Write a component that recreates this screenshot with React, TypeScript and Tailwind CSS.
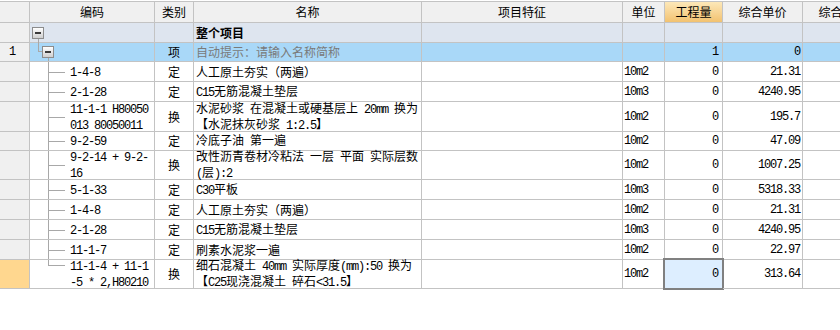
import React from 'react';

const MONO = "font-['Liberation_Mono',monospace] text-[12px] tracking-[-1.2px]";

function T({ s }: { s: string }) {
  const parts = s.split(/([\x20-\x7e]+)/).filter((p) => p !== '');
  return (
    <>
      {parts.map((p, i) =>
        /^[\x20-\x7e]+$/.test(p) ? (
          <span key={i} className={MONO}>
            {p}
          </span>
        ) : (
          <span key={i}>{p}</span>
        )
      )}
    </>
  );
}

const cell =
  'shrink-0 border-r border-b border-[#c3c3c3] flex items-center overflow-hidden relative whitespace-pre';
const ncell =
  'shrink-0 border-r border-b border-[#c3c3c3] flex items-center relative whitespace-pre';
const hcell =
  'shrink-0 border-t border-r border-b border-[#c3c3c3] flex items-center justify-center bg-[#f0f0f0]';
const LINE = 'bg-[#a8a8a8]';

function MinusBox({ cls }: { cls: string }) {
  return (
    <span
      className={`absolute w-[12px] h-[12px] border border-[#8c8c8c] bg-linear-to-b from-white to-[#cfcfcf] flex items-center justify-center ${cls}`}
    >
      <span className="w-[6px] h-[2px] bg-[#3a3a3a]" />
    </span>
  );
}

type Item = {
  h: string;
  code: string[];
  cat: string;
  name: string[];
  unit: string;
  qty: string;
  price: string;
  last?: boolean;
};

const items: Item[] = [
  { h: 'h-[20px]', code: ['1-4-8'], cat: '定', name: ['人工原土夯实（两遍）'], unit: '10m2', qty: '0', price: '21.31' },
  { h: 'h-[20px]', code: ['2-1-28'], cat: '定', name: ['C15无筋混凝土垫层'], unit: '10m3', qty: '0', price: '4240.95' },
  {
    h: 'h-[30px]',
    code: ['11-1-1 H80050', '013 80050011'],
    cat: '换',
    name: ['水泥砂浆 在混凝土或硬基层上 20mm 换为', '【水泥抹灰砂浆 1:2.5】'],
    unit: '10m2',
    qty: '0',
    price: '195.7',
  },
  { h: 'h-[19px]', code: ['9-2-59'], cat: '定', name: ['冷底子油 第一遍'], unit: '10m2', qty: '0', price: '47.09' },
  {
    h: 'h-[29px]',
    code: ['9-2-14 + 9-2-', '16'],
    cat: '换',
    name: ['改性沥青卷材冷粘法 一层 平面 实际层数', '(层):2'],
    unit: '10m2',
    qty: '0',
    price: '1007.25',
  },
  { h: 'h-[20px]', code: ['5-1-33'], cat: '定', name: ['C30平板'], unit: '10m3', qty: '0', price: '5318.33' },
  { h: 'h-[20px]', code: ['1-4-8'], cat: '定', name: ['人工原土夯实（两遍）'], unit: '10m2', qty: '0', price: '21.31' },
  { h: 'h-[20px]', code: ['2-1-28'], cat: '定', name: ['C15无筋混凝土垫层'], unit: '10m3', qty: '0', price: '4240.95' },
  { h: 'h-[20px]', code: ['11-1-7'], cat: '定', name: ['刷素水泥浆一遍'], unit: '10m2', qty: '0', price: '22.97' },
  {
    h: 'h-[29px]',
    code: ['11-1-4 + 11-1', '-5 * 2,H80210'],
    cat: '换',
    name: ['细石混凝土 40mm 实际厚度(mm):50 换为', '【C25现浇混凝土 碎石<31.5】'],
    unit: '10m2',
    qty: '0',
    price: '313.64',
    last: true,
  },
];

function Lines({ lines }: { lines: string[] }) {
  return (
    <div className="leading-[13px]">
      {lines.map((l, i) => (
        <div key={i}>
          <T s={l} />
        </div>
      ))}
    </div>
  );
}

export default function App() {
  return (
    <div className="w-[840px] h-[330px] overflow-hidden bg-white text-black font-['Noto_Sans_CJK_SC',sans-serif] text-[12px]">
      {/* header */}
      <div className="flex h-[22px] mt-px">
        <div className={`${hcell} w-[30px]`} />
        <div className={`${hcell} w-[125px]`}>编码</div>
        <div className={`${hcell} w-[39px]`}>类别</div>
        <div className={`${hcell} w-[228px]`}>名称</div>
        <div className={`${hcell} w-[201px]`}>项目特征</div>
        <div className={`${hcell} w-[42px]`}>单位</div>
        <div className={`${hcell} w-[58px] bg-linear-to-b from-[#fde8b8] to-[#f2c270]`}>工程量</div>
        <div className={`${hcell} w-[80px]`}>综合单价</div>
        <div className={`${hcell} w-[80px]`}>综合合价</div>
      </div>

      {/* root row */}
      <div className="flex h-[20px]">
        <div className={`${cell} w-[30px] bg-[#f0f0f0]`} />
        <div className={`${cell} w-[125px] bg-[#dee5ef] overflow-visible`}>
          <MinusBox cls="left-[2px] top-[4px]" />
          <span className={`absolute left-[8px] top-[16px] -bottom-px w-px ${LINE}`} />
        </div>
        <div className={`${cell} w-[39px] bg-[#dee5ef]`} />
        <div className={`${cell} w-[228px] bg-[#dee5ef] pl-[2px] font-bold`}>整个项目</div>
        <div className={`${cell} w-[201px] bg-[#dee5ef]`} />
        <div className={`${cell} w-[42px] bg-[#dee5ef]`} />
        <div className={`${cell} w-[58px] bg-[#dee5ef]`} />
        <div className={`${cell} w-[80px] bg-[#dee5ef]`} />
        <div className={`${cell} w-[80px] bg-[#dee5ef]`} />
      </div>

      {/* group row */}
      <div className="flex h-[19px]">
        <div className={`${cell} w-[30px] bg-[#f0f0f0] pl-[9px]`}>
          <span className={MONO}>1</span>
        </div>
        <div className={`${cell} w-[125px] bg-[#a9d8f8]`}>
          <span className={`absolute left-[8px] top-0 h-[9px] w-px ${LINE}`} />
          <span className={`absolute left-[8px] top-[8px] w-[5px] h-px ${LINE}`} />
          <MinusBox cls="left-[12px] top-[3px]" />
          <span className={`absolute left-[18px] top-[15px] -bottom-px w-px ${LINE}`} />
        </div>
        <div className={`${cell} w-[39px] bg-[#a9d8f8] justify-center`}>项</div>
        <div className={`${ncell} w-[228px] bg-[#a9d8f8] pl-[2px] text-[#7a7a7a]`}>自动提示：请输入名称简称</div>
        <div className={`${cell} w-[201px] bg-[#a9d8f8]`} />
        <div className={`${cell} w-[42px] bg-[#a9d8f8]`} />
        <div className={`${cell} w-[58px] bg-[#a9d8f8] justify-end pr-[4px]`}>
          <span className={MONO}>1</span>
        </div>
        <div className={`${cell} w-[80px] bg-[#a9d8f8] justify-end pr-[2px]`}>
          <span className={MONO}>0</span>
        </div>
        <div className={`${cell} w-[80px] bg-[#a9d8f8]`} />
      </div>

      {items.map((it, idx) => (
        <div key={idx} className={`flex ${it.h}`}>
          <div className={`${cell} w-[30px] ${it.last ? 'bg-[#ffd78f]' : 'bg-[#f0f0f0]'}`} />
          <div className={`${cell} w-[125px] pl-[40px]`}>
            {it.last ? (
              <>
                <span className={`absolute left-[18px] top-0 h-[6px] w-px ${LINE}`} />
                <span className={`absolute left-[18px] top-[5px] w-[17px] h-px ${LINE}`} />
              </>
            ) : (
              <>
                <span className={`absolute left-[18px] top-0 -bottom-px w-px ${LINE}`} />
                <span className={`absolute left-[18px] top-1/2 w-[17px] h-px ${LINE}`} />
              </>
            )}
            <Lines lines={it.code} />
          </div>
          <div className={`${cell} w-[39px] justify-center`}>{it.cat}</div>
          <div className={`${ncell} w-[228px] pl-[2px]`}>
            <Lines lines={it.name} />
          </div>
          <div className={`${cell} w-[201px]`} />
          <div className={`${cell} w-[42px] pl-[1px]`}>
            <span className={MONO}>{it.unit}</span>
          </div>
          <div className={`${cell} w-[58px] justify-end pr-[4px] ${it.last ? 'overflow-visible bg-[#ddeeff]' : ''}`}>
            {it.last && (
              <span className="absolute -left-[2px] -right-[2px] -top-[2px] -bottom-[2px] border-2 border-[#808080]" />
            )}
            <span className={`${MONO} relative`}>{it.qty}</span>
          </div>
          <div className={`${cell} w-[80px] justify-end pr-[2px]`}>
            <span className={MONO}>{it.price}</span>
          </div>
          <div className={`${cell} w-[80px]`} />
        </div>
      ))}
    </div>
  );
}
